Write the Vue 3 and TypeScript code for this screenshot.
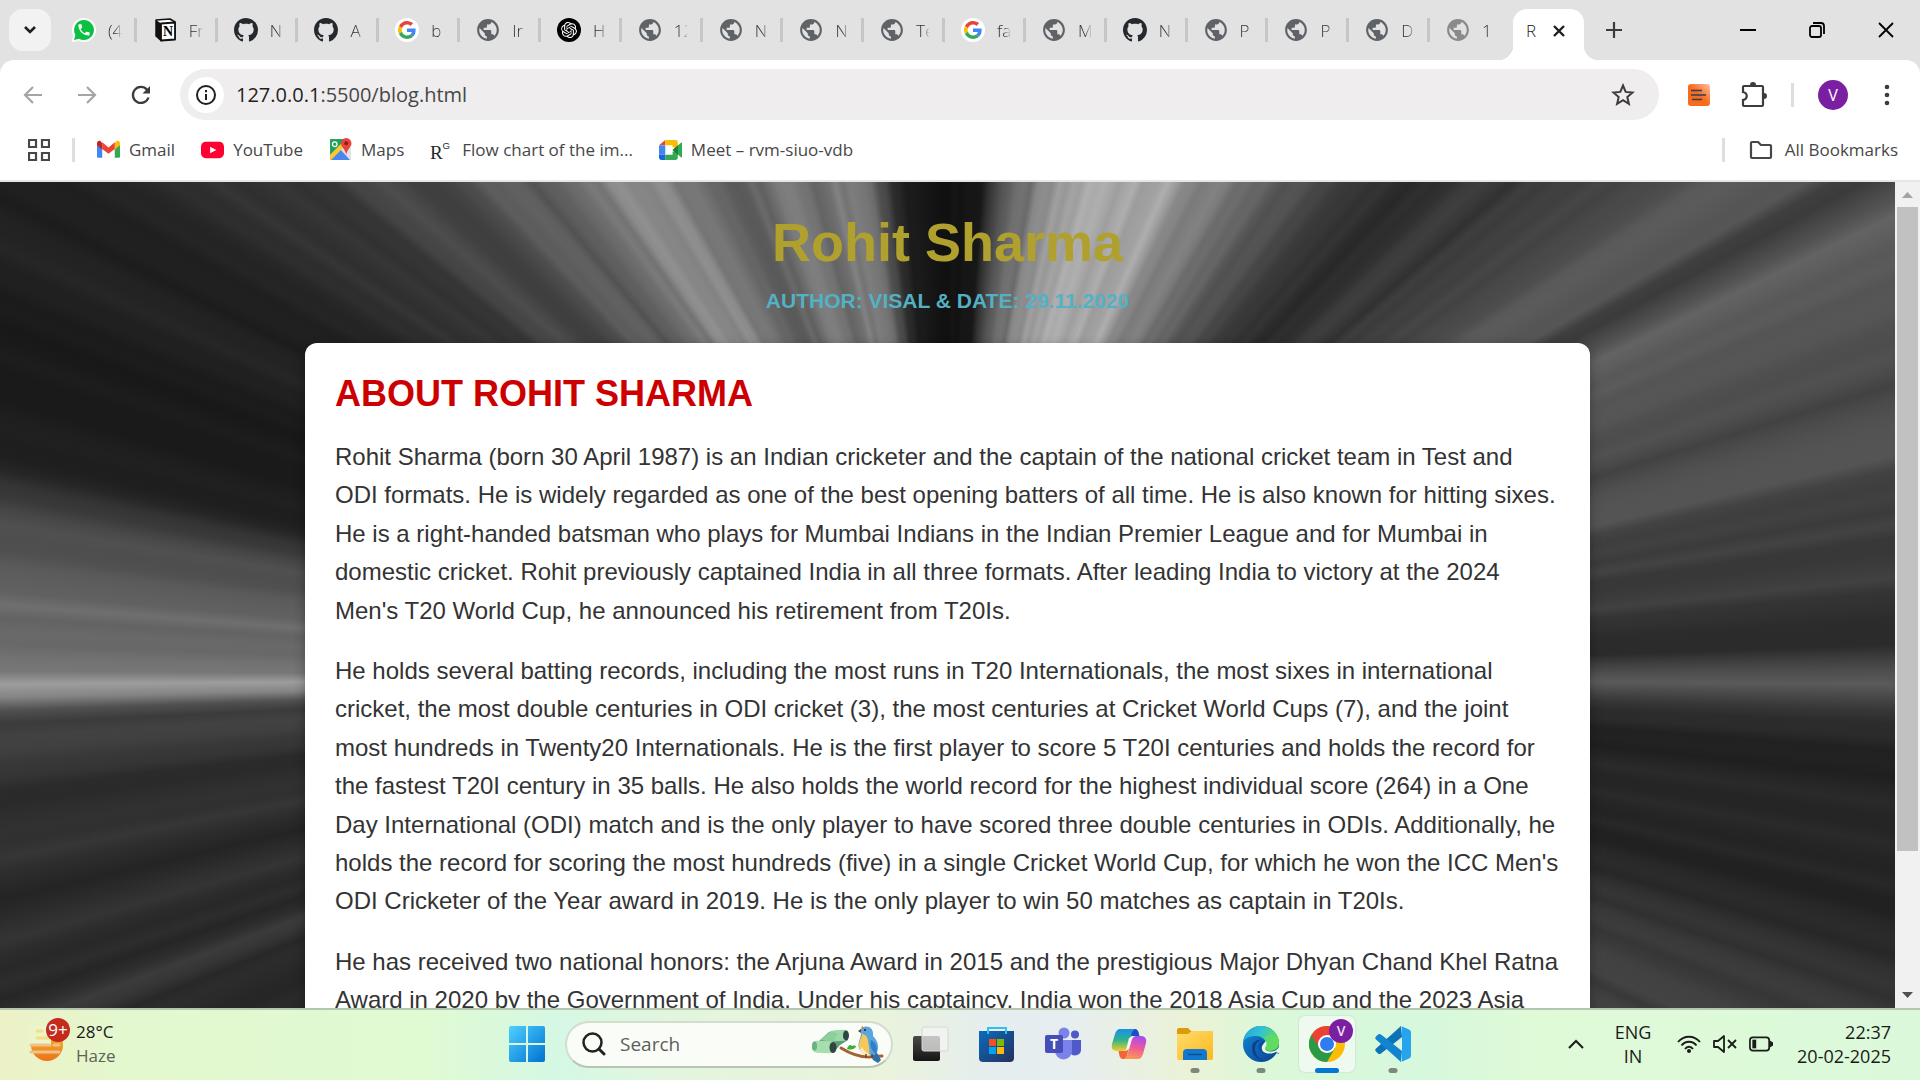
<script setup lang="ts">
import { ref } from 'vue'

interface Tab {
  icon: string
  title: string
}

const tabs: Tab[] = [
  { icon: 'whatsapp', title: '(4' },
  { icon: 'notion', title: 'Fr' },
  { icon: 'github', title: 'N' },
  { icon: 'github', title: 'A' },
  { icon: 'google', title: 'b' },
  { icon: 'globe', title: 'Ir' },
  { icon: 'openai', title: 'H' },
  { icon: 'globe', title: '12' },
  { icon: 'globe', title: 'N' },
  { icon: 'globe', title: 'N' },
  { icon: 'globe', title: 'Te' },
  { icon: 'google', title: 'fa' },
  { icon: 'globe', title: 'M' },
  { icon: 'github', title: 'N' },
  { icon: 'globe', title: 'P' },
  { icon: 'globe', title: 'P' },
  { icon: 'globe', title: 'D' },
  { icon: 'globe-light', title: '1' },
]

const bookmarks: Tab[] = [
  { icon: 'gmail', title: 'Gmail' },
  { icon: 'youtube', title: 'YouTube' },
  { icon: 'maps', title: 'Maps' },
  { icon: 'researchgate', title: 'Flow chart of the im...' },
  { icon: 'meet', title: 'Meet – rvm-siuo-vdb' },
]

const apps = [
  { icon: 'taskview', name: 'Task view', state: '' },
  { icon: 'store', name: 'Microsoft Store', state: '' },
  { icon: 'teams', name: 'Teams', state: '' },
  { icon: 'copilot', name: 'Copilot', state: '' },
  { icon: 'explorer', name: 'File Explorer', state: 'open' },
  { icon: 'edge', name: 'Edge', state: 'open' },
  { icon: 'chrome', name: 'Chrome', state: 'active' },
  { icon: 'vscode', name: 'Visual Studio Code', state: 'open' },
]

const paragraphs: string[] = [
  'Rohit Sharma (born 30 April 1987) is an Indian cricketer and the captain of the national cricket team in Test and ODI formats. He is widely regarded as one of the best opening batters of all time. He is also known for hitting sixes. He is a right-handed batsman who plays for Mumbai Indians in the Indian Premier League and for Mumbai in domestic cricket. Rohit previously captained India in all three formats. After leading India to victory at the 2024 Men\'s T20 World Cup, he announced his retirement from T20Is.',
  'He holds several batting records, including the most runs in T20 Internationals, the most sixes in international cricket, the most double centuries in ODI cricket (3), the most centuries at Cricket World Cups (7), and the joint most hundreds in Twenty20 Internationals. He is the first player to score 5 T20I centuries and holds the record for the fastest T20I century in 35 balls. He also holds the world record for the highest individual score (264) in a One Day International (ODI) match and is the only player to have scored three double centuries in ODIs. Additionally, he holds the record for scoring the most hundreds (five) in a single Cricket World Cup, for which he won the ICC Men\'s ODI Cricketer of the Year award in 2019. He is the only player to win 50 matches as captain in T20Is.',
  'He has received two national honors: the Arjuna Award in 2015 and the prestigious Major Dhyan Chand Khel Ratna Award in 2020 by the Government of India. Under his captaincy, India won the 2018 Asia Cup and the 2023 Asia',
]

const address = ref('')
const query = ref('')

// Brightness of the light streaks by direction: [degrees clockwise from up, grey level]
const rays: [number, number][] = [
  [0, 18], [4, 24], [6, 84], [9, 108], [12, 140], [15, 164], [19, 172], [22, 176], [25, 148],
  [29, 116], [33, 92], [37, 72], [40, 58], [43, 40], [45, 46], [47, 68], [49, 52], [51, 72],
  [53, 68], [56, 80], [58, 102], [60, 84], [61.5, 54], [63, 92], [66, 98], [69, 84], [72, 70],
  [76, 80], [80, 62], [84, 60], [87, 38], [88.5, 50], [89.5, 84], [90.3, 104], [91, 76],
  [92.5, 46], [95, 30], [99, 42], [104, 34], [108, 50], [113, 62], [125, 60], [235, 44],
  [244, 40], [248, 40], [249.5, 62], [251, 36], [254, 50], [257, 32], [259, 54], [263, 38],
  [265, 60], [267.6, 62], [268.4, 84], [268.9, 150], [269.6, 142], [270.6, 112], [272, 96],
  [274, 106], [276.5, 90], [279, 80], [281, 56], [283, 32], [287, 27], [291, 26], [294, 36],
  [297, 28], [300, 34], [303, 44], [306, 58], [308, 50], [311, 72], [314, 66], [317, 92],
  [321, 88], [325, 130], [329, 140], [333, 108], [337, 90], [341, 120], [344, 106],
  [348, 128], [351, 108], [353, 60], [355, 26], [358, 20], [360, 18],
]

function level(deg: number): number {
  let i = 1
  while (i < rays.length - 1 && rays[i][0] < deg) i++
  const [a, la] = rays[i - 1]
  const [b, lb] = rays[i]
  return la + ((lb - la) * (deg - a)) / (b - a)
}

function hash(n: number): number {
  const h = Math.sin(n * 12.9898) * 43758.5453
  return h - Math.floor(h) - 0.5
}

function streaks(): string {
  const stops: string[] = []
  for (let n = 0; n < 450; n++) {
    const deg = n * 0.8
    const grain = hash(n) * 0.22
    const v = Math.round(level(deg) * (1 + grain))
    stops.push(`rgb(${v},${v},${v}) ${deg.toFixed(1)}deg`)
  }
  return `conic-gradient(from 0deg at 50% 60%, ${stops.join(',')})`
}

const pageBackground = { backgroundImage: streaks() }
</script>

<template>
  <svg class="defs" aria-hidden="true">
    <linearGradient id="g-win" x1="0" y1="0" x2="1" y2="1"><stop offset="0" stop-color="#4fd0ff" /><stop offset="1" stop-color="#0072d2" /></linearGradient>
    <linearGradient id="g-sun" x1="0" y1="0" x2="0" y2="1"><stop offset="0" stop-color="#f5c12a" /><stop offset="1" stop-color="#f0701b" /></linearGradient>
    <linearGradient id="g-store" x1="0" y1="0" x2="1" y2="1"><stop offset="0" stop-color="#0a6cc0" /><stop offset="1" stop-color="#25305c" /></linearGradient>
    <linearGradient id="g-cop1" x1="0" y1="0" x2="0" y2="1"><stop offset="0" stop-color="#1a8fee" /><stop offset="0.5" stop-color="#2db38a" /><stop offset="1" stop-color="#f5cf28" /></linearGradient>
    <linearGradient id="g-cop2" x1="0.6" y1="0" x2="0.4" y2="1"><stop offset="0" stop-color="#a34df0" /><stop offset="0.5" stop-color="#ee5a9a" /><stop offset="1" stop-color="#fd9a4a" /></linearGradient>
    <linearGradient id="g-folder" x1="0" y1="0" x2="1" y2="1"><stop offset="0" stop-color="#ffdc6b" /><stop offset="1" stop-color="#fcb81f" /></linearGradient>
    <linearGradient id="g-edge1" x1="0" y1="0" x2="1" y2="0.4"><stop offset="0" stop-color="#22a2d8" /><stop offset="0.5" stop-color="#33c1d5" /><stop offset="1" stop-color="#68e04d" /></linearGradient>
    <linearGradient id="g-edge2" x1="0" y1="0" x2="1" y2="1"><stop offset="0" stop-color="#1289d8" /><stop offset="1" stop-color="#0b3f8f" /></linearGradient>
    <linearGradient id="g-ext" x1="0" y1="1" x2="1" y2="0"><stop offset="0.5" stop-color="#f86a1c" /><stop offset="1" stop-color="#fcc3a5" /></linearGradient>
    <linearGradient id="g-tv" x1="0" y1="0" x2="0" y2="1"><stop offset="0" stop-color="#4a4a48" /><stop offset="1" stop-color="#151515" /></linearGradient>

    <symbol id="whatsapp" viewBox="0 0 24 24">
      <path d="M12 0a12 12 0 0 1 0 24 12 12 0 0 1-5-1L0 24l1-7A12 12 0 0 1 12 0z" fill="#fff" />
      <path d="M12 2a10 10 0 1 1-5 18.700l-5 1.300 1.400-5A10 10 0 0 1 12 2z" fill="#0ac143" />
      <path transform="translate(4.500 4.500) scale(.62)" fill="#fff" d="M6.620 10.790c1.440 2.830 3.760 5.140 6.590 6.590l2.200-2.200c.27-.27.67-.36 1.020-.24 1.120.37 2.330.57 3.570.57.55 0 1 .45 1 1V20c0 .55-.45 1-1 1-9.390 0-17-7.610-17-17 0-.55.45-1 1-1h3.500c.55 0 1 .45 1 1 0 1.250.2 2.450.57 3.570.11.35.03.74-.25 1.020l-2.200 2.200z" />
    </symbol>
    <symbol id="notion" viewBox="0 0 24 24">
      <path d="M3 2l14-1 5 3v17L8 22.500 3 18z" fill="#fff" stroke="#111" stroke-width="1.500" stroke-linejoin="round" />
      <path d="M3 2l5 3.500v17L3 18z" fill="#111" />
      <path d="M8 5.500L22 4.500v17L8 22.500z" fill="#fff" stroke="#111" stroke-width="1.800" stroke-linejoin="round" />
    </symbol>
    <symbol id="github" viewBox="0 0 16 16">
      <path fill="#24292f" d="M8 0C3.580 0 0 3.580 0 8c0 3.540 2.290 6.530 5.470 7.590.4.070.55-.17.55-.38 0-.19-.01-.82-.01-1.490-2.010.37-2.530-.49-2.690-.94-.09-.23-.48-.94-.82-1.130-.28-.15-.68-.52-.01-.53.63-.01 1.080.58 1.230.82.72 1.210 1.870.87 2.330.66.070-.52.28-.87.51-1.070-1.780-.2-3.640-.89-3.640-3.950 0-.87.31-1.590.82-2.150-.08-.2-.36-1.020.08-2.120 0 0 .67-.21 2.200.82.64-.18 1.320-.27 2-.27s1.360.09 2 .27c1.530-1.040 2.200-.82 2.200-.82.44 1.100.16 1.920.08 2.120.51.56.82 1.270.82 2.150 0 3.070-1.870 3.750-3.650 3.950.29.25.54.73.54 1.480 0 1.070-.01 1.930-.01 2.200 0 .21.15.46.55.38A8.010 8.010 0 0 0 16 8c0-4.420-3.580-8-8-8z" />
    </symbol>
    <symbol id="google" viewBox="-8 -8 64 64">
      <circle cx="24" cy="24" r="32" fill="#fff" />
      <path fill="#ea4335" d="M24 9.500c3.540 0 6.710 1.220 9.210 3.600l6.850-6.850C35.900 2.380 30.470 0 24 0 14.620 0 6.510 5.380 2.560 13.220l7.980 6.190C12.430 13.720 17.740 9.500 24 9.500z" />
      <path fill="#4285f4" d="M46.980 24.550c0-1.570-.15-3.090-.38-4.550H24v9.020h12.940c-.58 2.960-2.260 5.480-4.780 7.180l7.730 6c4.510-4.180 7.090-10.360 7.090-17.650z" />
      <path fill="#fbbc05" d="M10.530 28.590c-.48-1.450-.76-2.990-.76-4.590s.27-3.140.76-4.590l-7.980-6.190C.92 16.460 0 20.120 0 24c0 3.880.92 7.540 2.560 10.780l7.970-6.190z" />
      <path fill="#34a853" d="M24 48c6.480 0 11.930-2.130 15.890-5.810l-7.730-6c-2.150 1.450-4.920 2.300-8.160 2.300-6.260 0-11.570-4.220-13.470-9.910l-7.980 6.190C6.510 42.620 14.620 48 24 48z" />
    </symbol>
    <symbol id="globe" viewBox="1 1 22 22">
      <path fill="#5f6368" d="M12 2C6.480 2 2 6.480 2 12s4.480 10 10 10 10-4.480 10-10S17.520 2 12 2zm-1 17.930c-3.950-.49-7-3.850-7-7.930 0-.62.08-1.210.21-1.790L9 15v1c0 1.100.9 2 2 2v1.930zm6.900-2.540c-.26-.81-1-1.390-1.900-1.390h-1v-3c0-.55-.45-1-1-1H8v-2h2c.55 0 1-.45 1-1V7h2c1.100 0 2-.9 2-2v-.41c2.930 1.190 5 4.060 5 7.410 0 2.080-.8 3.970-2.100 5.390z" />
    </symbol>
    <symbol id="globe-light" viewBox="1 1 22 22">
      <path fill="#8a8a8a" d="M12 2C6.480 2 2 6.480 2 12s4.480 10 10 10 10-4.480 10-10S17.520 2 12 2zm-1 17.930c-3.950-.49-7-3.850-7-7.930 0-.62.08-1.210.21-1.790L9 15v1c0 1.100.9 2 2 2v1.930zm6.900-2.540c-.26-.81-1-1.390-1.900-1.390h-1v-3c0-.55-.45-1-1-1H8v-2h2c.55 0 1-.45 1-1V7h2c1.100 0 2-.9 2-2v-.41c2.930 1.190 5 4.060 5 7.410 0 2.080-.8 3.970-2.100 5.390z" />
    </symbol>
    <symbol id="openai" viewBox="-6 -6 36 36">
      <circle cx="12" cy="12" r="18" />
      <path fill="#fff" d="M22.282 9.821a5.985 5.985 0 0 0-.516-4.911 6.046 6.046 0 0 0-6.510-2.900A6.065 6.065 0 0 0 4.981 4.182a5.985 5.985 0 0 0-3.998 2.900 6.046 6.046 0 0 0 .743 7.097 5.980 5.980 0 0 0 .511 4.911 6.051 6.051 0 0 0 6.515 2.900A5.985 5.985 0 0 0 13.260 24a6.056 6.056 0 0 0 5.772-4.206 5.989 5.989 0 0 0 3.998-2.900 6.056 6.056 0 0 0-.748-7.073zm-9.022 12.608a4.476 4.476 0 0 1-2.876-1.041l.142-.080 4.778-2.758a.795.795 0 0 0 .393-.681v-6.737l2.020 1.169a.071.071 0 0 1 .038.052v5.583a4.504 4.504 0 0 1-4.495 4.494zm-9.661-4.125a4.471 4.471 0 0 1-.535-3.014l.142.085 4.783 2.758a.771.771 0 0 0 .781 0l5.843-3.369v2.332a.080.080 0 0 1-.033.062L9.740 19.950a4.499 4.499 0 0 1-6.141-1.646zM2.341 7.896a4.485 4.485 0 0 1 2.366-1.973V11.600a.766.766 0 0 0 .388.677l5.814 3.354-2.020 1.169a.076.076 0 0 1-.071 0l-4.830-2.787A4.504 4.504 0 0 1 2.341 7.872zm16.596 3.856L13.104 8.364 15.119 7.200a.076.076 0 0 1 .071 0l4.830 2.791a4.494 4.494 0 0 1-.677 8.104v-5.677a.79.79 0 0 0-.407-.667zm2.011-3.023l-.142-.085-4.774-2.782a.776.776 0 0 0-.785 0L9.409 9.230V6.897a.066.066 0 0 1 .028-.062l4.830-2.787a4.499 4.499 0 0 1 6.680 4.660zM8.307 12.863l-2.020-1.164a.080.080 0 0 1-.038-.057V6.074a4.499 4.499 0 0 1 7.376-3.454l-.142.081L8.704 5.459a.795.795 0 0 0-.393.681zm1.098-2.365l2.602-1.500 2.607 1.500v2.999l-2.597 1.500-2.607-1.500z" />
    </symbol>

    <symbol id="gmail" viewBox="0 0 22 22">
      <path d="M0 5v13a1 1 0 0 0 1 1h4V9z" fill="#4285f4" />
      <path d="M22 5v13a1 1 0 0 1-1 1h-4V9z" fill="#34a853" />
      <path d="M17 5v6l5-4V5c0-2-2-3-3.500-2z" fill="#fbbc04" />
      <path d="M5 5v6L0 7V5c0-2 2-3 3.500-2z" fill="#c5221f" />
      <path d="M5 4l6 5 6-5v6.500L11 15l-6-4.500z" fill="#ea4335" />
    </symbol>
    <symbol id="youtube" viewBox="0 0 24 22">
      <rect x="0" y="3" width="24" height="17" rx="5" fill="#ff0033" />
      <path d="M9.500 8l6.500 3.500-6.500 3.500z" fill="#fff" />
    </symbol>
    <symbol id="maps" viewBox="0 0 22 22">
      <path d="M1 1h16v20H1z" fill="#1fa15a" />
      <path d="M1 20L18 3l3 6v12H1z" fill="#dfe3e6" />
      <path d="M1 21l10-10 9 10z" fill="#4a86ee" />
      <path d="M1 16L14 3l3 3L2 21H1z" fill="#fbc834" />
      <circle cx="5.500" cy="6" r="2.200" fill="none" stroke="#fff" stroke-width="1.200" />
      <path d="M16.500 0a5 5 0 0 1 5 5c0 4-4 5-5 11-1-6-5-7-5-11a5 5 0 0 1 5-5z" fill="#e8453c" />
      <circle cx="16.500" cy="5" r="1.900" fill="#8c1d18" />
    </symbol>
    <symbol id="meet" viewBox="0 0 22 22">
      <path d="M0 7l6-5v5z" fill="#ea4335" />
      <path d="M6 2h10a2 2 0 0 1 2 2v5h-5V7H6z" fill="#fbbc04" />
      <path d="M0 7h6v9H0z" fill="#4285f4" />
      <path d="M0 16h6v5H2a2 2 0 0 1-2-2z" fill="#1967d2" />
      <path d="M6 16h7v-3h5v6a2 2 0 0 1-2 2H6z" fill="#34a853" />
      <path d="M13 11.500L21 4.500c.5-.4 1 0 1 .5v13c0 .5-.5.9-1 .5z" fill="#34a853" />
      <path d="M13 11.500l5-4.500v9z" fill="#188038" />
    </symbol>

    <symbol id="taskview" viewBox="0 0 36 36">
      <rect x="0" y="10" width="27" height="25" rx="2" fill="url(#g-tv)" />
      <rect x="9" y="1" width="26" height="24" rx="2" fill="#f4f4f4" fill-opacity=".72" stroke="#d6d6d6" />
    </symbol>
    <symbol id="store" viewBox="0 0 36 36">
      <path d="M0 5h35v27a4 4 0 0 1-4 4H4a4 4 0 0 1-4-4z" fill="url(#g-store)" />
      <path d="M9 8V2h18v6" fill="none" stroke="#2cc0f4" stroke-width="2" />
      <path d="M10 13h7v7h-7z" fill="#f25022" /><path d="M18 13h7v7h-7z" fill="#7fba00" />
      <path d="M10 21h7v7h-7z" fill="#00a4ef" /><path d="M18 21h7v7h-7z" fill="#ffb900" />
    </symbol>
    <symbol id="teams" viewBox="0 0 36 36">
      <circle cx="30" cy="8.500" r="4" fill="#5059c9" />
      <path d="M24 14h12v10a6 6 0 0 1-10 4z" fill="#5059c9" />
      <circle cx="19" cy="7" r="5.500" fill="#7b83eb" />
      <path d="M10 14h17v11a8.500 8.500 0 0 1-17 0z" fill="#7b83eb" />
      <rect x="0" y="9" width="18" height="18" rx="2" fill="#464eb8" />
    </symbol>
    <symbol id="copilot" viewBox="0 0 36 36">
      <path d="M21 3h3c2 0 3 1.500 3.500 3l1 4h-7c-3 0-4 2-5 5z" fill="#1d4fc4" />
      <path d="M15 33h-3c-2 0-3-1.500-3.500-3l-1-5h6c3 0 4-2 5-5z" fill="#f2643c" />
      <path d="M9 3h15c-2 1-3 3-3.500 5l-4 13c-.7 2.500-2 4-5 4H6c-4 0-6-2-5-7L4 8c1-3 2.500-5 5-5z" fill="url(#g-cop1)" />
      <path d="M27 33H13c2-1 3-3 3.500-5l4-13c.7-2.500 2-5 5-5H30c4 0 6 3 5 7l-3 11c-1 3-2.500 5-5 5z" fill="url(#g-cop2)" />
      <path d="M18 12l3-1-3 12-3 1z" fill="#f3f6f4" />
    </symbol>
    <symbol id="explorer" viewBox="0 0 36 36">
      <path d="M0 4a2 2 0 0 1 2-2h9l4 4-4 4H0z" fill="#dc9b0b" />
      <path d="M0 8h11l4-3h20a1 1 0 0 1 1 1v26a2 2 0 0 1-2 2H2a2 2 0 0 1-2-2z" fill="url(#g-folder)" />
      <path d="M6 34v-7a4 4 0 0 1 4-4h16a4 4 0 0 1 4 4v7z" fill="#1279ce" />
      <path d="M11 28.500h14" stroke="#0b4f93" stroke-width="1.500" />
    </symbol>
    <symbol id="edge" viewBox="0 0 36 36">
      <circle cx="18" cy="18" r="18" fill="url(#g-edge2)" />
      <path d="M0 16C1 7 8 0 18 0s18 8 18 16c0 6-4 9-9 9-3 0-5-1-5-2.500 0-1 1-2 1-4.500 0-5-5-8-10-8-6 0-11 2-13 6z" fill="url(#g-edge1)" />
      <path d="M9 22c0 7 6 13 14 13-7-1-11-6-11-12 0-5 3-9 7-9-6-1-10 3-10 8z" fill="#0c3f8c" />
      <path d="M23.500 15c-3-1.500-7 0-8 4-1 6 4 10 10 10 3.500 0 6-1 8-2l4 1v-7l-5 2c-2 1.500-4 2-6 2-3 0-5-1.500-5-3 0-1 2-3 2-7z" fill="#0c50a3" />
      <path d="M23 14.500c2 4 0 6.500-1 8 0 1.500 2 3 6 3 3 0 6-1.500 8-4.500v6l-2.500-.5c.3-.6 0-.9-.5-.6-2 1-4.500 1.600-7 1.600-5 0-8-3-7-7 .5-2 2-3 4-6z" fill="#e4f8dc" />
      <path d="M21 12c3 3 3 7 1 9.500 0 2 2 3.500 6 3.500 5 0 8-4 8-9l-9-8z" fill="#5fdc62" fill-opacity=".65" />
    </symbol>
    <symbol id="chrome" viewBox="0 0 36 36">
      <circle cx="18" cy="18" r="18" fill="#fbbc05" />
      <path d="M18 18L2.400 9A18 18 0 0 0 18 36l8-14z" fill="#2a9a47" />
      <path d="M18 9h15.600A18 18 0 0 0 2.400 9l8 13z" fill="#ea4335" />
      <circle cx="18" cy="18" r="9" fill="#fff" />
      <circle cx="18" cy="18" r="7" fill="#2f7bf0" />
    </symbol>
    <symbol id="vscode" viewBox="0 0 36 36">
      <path d="M26 0L1 22.500c-1 1-1 2 0 3l2 2c1 .8 2 .8 3 0L27 11z" fill="#0c73ba" />
      <path d="M26 36L1 13.500c-1-1-1-2 0-3l2-2c1-.8 2-.8 3 0L27 25z" fill="#1384cf" />
      <path d="M26 0l8 3.500c1 .5 2 1.500 2 3v23c0 1.500-1 2.500-2 3L26 36c1-1 1-1 1-3V3c0-1.500 0-2-1-3z" fill="#26a4ee" />
    </symbol>
  </svg>

  <div class="desktop">
    <header class="tabstrip">
      <button class="tab-search" aria-label="Search tabs">
        <svg width="14" height="10" viewBox="0 0 14 10"><path d="M2 2l5 5 5-5" fill="none" stroke="#1f1f1f" stroke-width="2.600" /></svg>
      </button>
      <nav class="tabs">
        <button v-for="(tab, i) in tabs" :key="i" class="tab">
          <svg class="favicon" viewBox="0 0 24 24">
            <use :href="'#' + tab.icon" />
            <text v-if="tab.icon === 'notion'" x="15" y="18" text-anchor="middle" font-family="Liberation Serif, serif" font-weight="bold" font-size="14">N</text>
          </svg>
          <span class="tab-title">{{ tab.title }}</span>
        </button>
      </nav>
      <div class="tab-active">
        <span class="active-title">R</span>
        <button class="tab-close" aria-label="Close tab">
          <svg width="14" height="14" viewBox="0 0 14 14"><path d="M2 2l10 10M12 2L2 12" stroke="#1f1f1f" stroke-width="2.400" /></svg>
        </button>
      </div>
      <button class="strip-button" aria-label="New tab">
        <svg width="16" height="16" viewBox="0 0 16 16"><path d="M8 0v16M0 8h16" stroke="#3c3c3c" stroke-width="2.200" /></svg>
      </button>
      <div class="window-controls">
        <button aria-label="Minimise"><svg width="16" height="16" viewBox="0 0 16 16"><path d="M0 8h16" stroke="#000" stroke-width="2" /></svg></button>
        <button aria-label="Restore">
          <svg width="16" height="16" viewBox="0 0 16 16"><g fill="none" stroke="#000" stroke-width="1.800"><rect x="1" y="4" width="11" height="11" rx="2" /><path d="M4 1h8a3 3 0 0 1 3 3v8" /></g></svg>
        </button>
        <button aria-label="Close"><svg width="16" height="16" viewBox="0 0 16 16"><path d="M1 1l14 14M15 1L1 15" stroke="#000" stroke-width="1.800" /></svg></button>
      </div>
    </header>

    <div class="chrome-bars">
      <div class="toolbar">
        <button class="nav-button" aria-label="Back"><svg width="20" height="20" viewBox="0 0 20 20"><path d="M19 10H2M10 2l-8 8 8 8" fill="none" stroke="#a5a5a5" stroke-width="2.200" /></svg></button>
        <button class="nav-button" aria-label="Forward"><svg width="20" height="20" viewBox="0 0 20 20"><path d="M1 10h17M10 2l8 8-8 8" fill="none" stroke="#a5a5a5" stroke-width="2.200" /></svg></button>
        <button class="nav-button" aria-label="Reload"><svg width="20" height="20" viewBox="0 0 20 20"><path d="M17.500 12.500A8 8 0 1 1 16 4.700L18 7" fill="none" stroke="#3c3c3c" stroke-width="2.300" /><path d="M19 1v7.500h-7.500z" fill="#3c3c3c" /></svg></button>
        <label class="omnibox">
          <span class="site-info"><svg width="20" height="20" viewBox="0 0 20 20"><circle cx="10" cy="10" r="9" fill="none" stroke="#1f1f1f" stroke-width="2" /><path d="M10 9v6M10 5v2.200" stroke="#1f1f1f" stroke-width="2" /></svg></span>
          <span class="url">127.0.0.1<span class="url-path">:5500/blog.html</span></span>
          <input v-model="address" class="url-input" type="text" aria-label="Address" />
          <svg class="star" width="24" height="24" viewBox="0 0 24 24"><path d="M12 2.500l2.700 6.400 6.800.6-5.200 4.500 1.600 6.800L12 17.200l-5.900 3.600 1.600-6.800-5.200-4.500 6.800-.6z" fill="none" stroke="#3c3c3c" stroke-width="2" /></svg>
        </label>
        <div class="toolbar-end">
          <button class="tool" aria-label="Reader extension"><svg width="22" height="22" viewBox="0 0 22 22"><rect width="22" height="22" rx="3" fill="url(#g-ext)" /><path d="M3 6.500h11M3 11h15M4 15.500h10" stroke="#274259" stroke-width="1.700" /></svg></button>
          <button class="tool" aria-label="Extensions"><svg width="26" height="26" viewBox="0 0 26 26"><path d="M3 4h18a1 1 0 0 1 1 1v18a1 1 0 0 1-1 1H3a1 1 0 0 1-1-1v-5c5-1 5-7 0-8V5a1 1 0 0 1 1-1z" fill="none" stroke="#3c3c3c" stroke-width="2.200" /><path d="M9 3a3 3 0 0 1 6 0zM23 11a3 3 0 0 1 0 6z" fill="#3c3c3c" /></svg></button>
          <span class="rule"></span>
          <button class="avatar" aria-label="Profile">V</button>
          <button class="menu" aria-label="Menu"><svg width="6" height="22" viewBox="0 0 6 22"><g fill="#3c3c3c"><circle cx="3" cy="3" r="2.300" /><circle cx="3" cy="11" r="2.300" /><circle cx="3" cy="19" r="2.300" /></g></svg></button>
        </div>
      </div>
      <nav class="bookmarks">
        <button class="apps" aria-label="Apps"><svg width="22" height="22" viewBox="0 0 22 22"><path d="M1 1h7v7H1zM14 1h7v7h-7zM1 14h7v7H1zM14 14h7v7h-7z" fill="none" stroke="#474747" stroke-width="2.200" /></svg></button>
        <span class="rule"></span>
        <a v-for="b in bookmarks" :key="b.title" class="bookmark" href="#">
          <svg v-if="b.icon === 'researchgate'" class="mark" viewBox="0 0 24 24" fill="#1e2b2b">
            <text x="0" y="22" font-family="Liberation Serif, serif" font-size="20">R</text>
            <text x="13" y="11" font-family="Liberation Sans, sans-serif" font-size="10">G</text>
          </svg>
          <svg v-else class="mark"><use :href="'#' + b.icon" /></svg>{{ b.title }}
        </a>
        <span class="rule rule-end"></span>
        <a class="bookmark all" href="#">
          <svg width="24" height="20" viewBox="0 0 24 20"><path d="M3 2h6l3 3h9a1 1 0 0 1 1 1v11a1 1 0 0 1-1 1H3a1 1 0 0 1-1-1V3a1 1 0 0 1 1-1z" fill="none" stroke="#474747" stroke-width="2.200" /></svg>All Bookmarks
        </a>
      </nav>
    </div>

    <div class="viewport">
      <main class="page" :style="pageBackground">
        <h1>Rohit Sharma</h1>
        <p class="byline">Author: Visal &amp; Date: 29.11.2020</p>
        <article class="card">
          <h2>About Rohit Sharma</h2>
          <p v-for="(text, i) in paragraphs" :key="i">{{ text }}</p>
        </article>
      </main>
      <div class="scrollbar" aria-hidden="true">
        <svg width="11" height="6" viewBox="0 0 11 6"><path d="M0 6l5.500-6L11 6z" fill="#a3a3a3" /></svg>
        <div class="track"><div class="thumb"></div></div>
        <svg width="11" height="6" viewBox="0 0 11 6"><path d="M0 0l5.500 6L11 0z" fill="#505050" /></svg>
      </div>
    </div>

    <footer class="taskbar">
      <button class="weather">
        <span class="weather-icon">
          <svg width="36" height="38" viewBox="0 0 36 38">
            <circle cx="18" cy="20" r="16" fill="url(#g-sun)" />
            <path d="M0 0h36v14H22v5H0z" fill="#eaf5cb" />
            <g stroke-linecap="round" stroke-width="3"><path d="M8 6h5M8 13h12" stroke="#f8dc86" /><path d="M2 20h19M25 20h5M2 27h28" stroke="#ecc389" /></g>
          </svg>
          <span class="count">9+</span>
        </span>
        <span class="weather-text">28°C<small>Haze</small></span>
      </button>

      <div class="dock">
        <button class="app" aria-label="Start"><svg class="app-icon" viewBox="0 0 36 36"><path d="M2 0h15v17H0V2a2 2 0 0 1 2-2zM19 0h15a2 2 0 0 1 2 2v15H19zM0 19h17v17H2a2 2 0 0 1-2-2zM19 19h17v15a2 2 0 0 1-2 2H19z" fill="url(#g-win)" /></svg></button>
        <label class="search">
          <svg width="24" height="24" viewBox="0 0 24 24"><circle cx="10.500" cy="10.500" r="9" fill="none" stroke="#222" stroke-width="2.500" /><path d="M17 17l5 5" stroke="#222" stroke-width="3" stroke-linecap="round" /></svg>
          <input v-model="query" type="text" placeholder="Search" aria-label="Search" />
          <svg width="80" height="38" viewBox="0 0 80 38">
            <path d="M8 16l10-9 12-2 7 3v7l-8 5-6 7-12 1z" fill="#5f9b78" />
            <rect x="20" y="5" width="17" height="11" rx="4" fill="#9fd8a8" transform="rotate(-4 28 10)" />
            <path d="M9 15l11-9 7 3-5 8z" fill="#8dce9d" />
            <rect x="1" y="16" width="23" height="12" rx="5" fill="#a6dfae" transform="rotate(3 12 22)" />
            <ellipse cx="35" cy="10.500" rx="3" ry="5" fill="#2f4740" /><ellipse cx="22" cy="22.500" rx="3.500" ry="5.500" fill="#2f4740" />
            <ellipse cx="3.500" cy="21" rx="2.500" ry="4.500" fill="#6fb083" />
            <path d="M30 23c8 5 17 9 28 9l13-1" fill="none" stroke="#a5622f" stroke-width="3" stroke-linecap="round" />
            <path d="M36 24c1-4 4-5 5-3 3-1 4 0 4 1-3 3-6 3-9 2z" fill="#3fae3a" />
            <path d="M57 24l8 2 5 9-3 3-5-3z" fill="#2f6fa8" />
            <path d="M50 4l3-2c6-2 10 3 9 9 5 5 7 12 3 18-6 4-15 1-17-6-2-6 3-10 2-19z" fill="#5aa5de" />
            <path d="M50 8c4 2 7 3 7 8 1 6 2 10 1 14-6 0-10-4-10-9s3-8 3-13z" fill="#f6c75b" />
            <path d="M51 22c2 4 5 6 9 8-6 2-10-1-11-5z" fill="#fbe8bd" />
            <path d="M50 4l-3 2 3 2z" fill="#444" /><path d="M50 4l1-3 3 2z" fill="#d28437" /><circle cx="54" cy="5" r="1" fill="#123" />
            <path d="M60 15c5 2 7 8 5 14-4-3-7-8-5-14z" fill="#2f80c4" />
            <path d="M55 29v4M61 29v4" stroke="#7a3d20" stroke-width="1.500" />
          </svg>
        </label>
        <button v-for="app in apps" :key="app.icon" class="app" :class="app.state" :aria-label="app.name">
          <svg class="app-icon" viewBox="0 0 36 36">
            <use :href="'#' + app.icon" />
            <text v-if="app.icon === 'teams'" x="9" y="23" text-anchor="middle" font-family="Open Sans, sans-serif" font-weight="bold" font-size="14" fill="#fff">T</text>
          </svg>
          <span v-if="app.state === 'active'" class="profile">V</span>
        </button>
      </div>

      <div class="tray">
        <button class="tray-button" aria-label="Hidden icons"><svg width="18" height="12" viewBox="0 0 18 12"><path d="M2 10l7-7 7 7" fill="none" stroke="#1b1b1b" stroke-width="2" /></svg></button>
        <button class="lang">ENG<br />IN</button>
        <button class="status" aria-label="Network, sound and battery">
          <svg width="24" height="20" viewBox="0 0 24 20"><g fill="none" stroke="#1b1b1b" stroke-width="1.900"><path d="M1 8C7 1 17 1 23 8M4.500 11.500c4-5 11-5 15 0M8 15c2-3 6-3 8 0" /></g><circle cx="12" cy="17" r="2" fill="#1b1b1b" /></svg>
          <svg width="24" height="20" viewBox="0 0 24 20"><path d="M1 7h4l6-5v16l-6-5H1z" fill="none" stroke="#1b1b1b" stroke-width="1.800" stroke-linejoin="round" /><path d="M15 6l8 8M23 6l-8 8" stroke="#1b1b1b" stroke-width="1.800" /></svg>
          <svg width="24" height="20" viewBox="0 0 25 20"><rect x="1" y="3" width="20" height="14" rx="3" fill="none" stroke="#1b1b1b" stroke-width="1.800" /><path d="M3.500 5.500h4v9h-4z" fill="#1b1b1b" /><path d="M22 7l3 2v2l-3 2z" fill="#1b1b1b" stroke="#1b1b1b" /></svg>
        </button>
        <button class="clock">22:37<br />20-02-2025</button>
      </div>
    </footer>
  </div>
</template>

<style>
html,
body {
  margin: 0;
  overflow: hidden;
}
</style>

<style scoped>
.defs {
  position: absolute;
  width: 0;
  height: 0;
}

.desktop {
  display: flex;
  flex-direction: column;
  height: 100vh;
  overflow: hidden;
  font-family: "Open Sans", "Noto Sans", sans-serif;
  color: #1b1b1b;
}

button {
  display: flex;
  align-items: center;
  justify-content: center;
  margin: 0;
  padding: 0;
  border: 0;
  background: none;
  color: inherit;
  font: inherit;
}

input {
  min-width: 0;
  flex: 1;
  padding: 0;
  border: 0;
  outline: 0;
  background: none;
  color: inherit;
  font: inherit;
}

svg {
  flex: none;
}

/* Tab strip */
.tabstrip {
  display: flex;
  align-items: center;
  height: 60px;
  flex: none;
  background: #e2e2e2;
}

.tab-search {
  width: 42px;
  height: 42px;
  margin: 0 5px 0 9px;
  flex: none;
  border-radius: 14px;
  background: #f2f2f2;
}

.tabs {
  display: flex;
  flex: 1;
  min-width: 0;
  margin-right: 2px;
}

.tab {
  flex: 1 1 0;
  min-width: 0;
  height: 24px;
  padding-left: 16px;
  gap: 12px;
  justify-content: flex-start;
  border-right: 3px solid #c6c6c6;
  font-size: 17px;
  font-weight: 300;
  color: #333;
}

.tab:last-child {
  border-color: transparent;
}

.favicon {
  width: 24px;
  height: 24px;
}

.tab-title {
  width: 14px;
  overflow: hidden;
  white-space: nowrap;
  text-align: left;
  -webkit-mask-image: linear-gradient(90deg, #000 50%, transparent);
  mask-image: linear-gradient(90deg, #000 50%, transparent);
}

.tab-active {
  position: relative;
  display: flex;
  align-items: center;
  align-self: flex-end;
  justify-content: space-between;
  box-sizing: border-box;
  width: 71px;
  height: 51px;
  padding: 0 18px 8px 13px;
  flex: none;
  border-radius: 14px 14px 0 0;
  background: #fff;
  font-size: 17px;
  font-weight: 300;
}

.tab-active::before,
.tab-active::after {
  content: "";
  position: absolute;
  bottom: 0;
  width: 14px;
  height: 14px;
}

.tab-active::before {
  right: 100%;
  background: radial-gradient(circle at 0 0, transparent 14px, #fff 14px);
}

.tab-active::after {
  left: 100%;
  background: radial-gradient(circle at 100% 0, transparent 14px, #fff 14px);
}

.strip-button {
  width: 60px;
  height: 42px;
  flex: none;
}

.window-controls {
  display: flex;
  margin-left: 69px;
  flex: none;
}

.window-controls button {
  width: 69px;
  height: 60px;
}

/* Toolbar and bookmarks */
.chrome-bars {
  flex: none;
  border-bottom: 2px solid #e2e8e2;
  background: linear-gradient(#e2e2e2 14px, #fff 14px);
}

.toolbar {
  display: flex;
  align-items: center;
  height: 69px;
  padding: 0 6px;
  border-radius: 14px 14px 0 0;
  background: #fff;
}

.nav-button {
  width: 54px;
  height: 42px;
  flex: none;
}

.omnibox {
  display: flex;
  align-items: center;
  box-sizing: border-box;
  flex: 1;
  min-width: 0;
  height: 51px;
  margin-left: 12px;
  padding: 0 24px 0 8px;
  border-radius: 26px;
  background: #efedee;
  font-size: 20px;
}

.site-info {
  display: flex;
  align-items: center;
  justify-content: center;
  width: 36px;
  height: 36px;
  margin-right: 12px;
  border-radius: 50%;
  background: #fff;
}

.url {
  color: #1f1f1f;
}

.url-path {
  color: #474747;
}

.toolbar-end {
  display: flex;
  align-items: center;
  width: 255px;
  flex: none;
}

.tool {
  width: 55px;
  height: 42px;
}

.tool:first-child {
  margin-left: 12px;
}

.rule {
  width: 3px;
  height: 24px;
  flex: none;
  background: #dedede;
}

.toolbar-end .rule {
  margin-left: 10px;
}

.avatar {
  width: 30px;
  height: 30px;
  margin-left: 24px;
  border-radius: 50%;
  background: #7b1fa2;
  color: #fff;
  font-size: 16px;
}

.menu {
  width: 42px;
  height: 42px;
  margin-left: 18px;
}

.bookmarks {
  display: flex;
  align-items: center;
  height: 41px;
  padding: 0 22px 10px 28px;
  background: #fff;
}

.apps {
  margin-right: 22px;
}

.bookmark {
  display: flex;
  align-items: center;
  gap: 9px;
  margin-left: 26px;
  color: #474747;
  font-size: 17px;
  text-decoration: none;
  white-space: nowrap;
}

.bookmark:first-of-type {
  margin-left: 22px;
}

.mark {
  width: 23px;
  height: 23px;
  overflow: visible;
}

.rule-end {
  margin-left: auto;
}

.bookmark.all {
  gap: 12px;
  margin-left: 24px;
}

/* Web page */
.viewport {
  display: flex;
  flex: 1;
  min-height: 0;
}

.page {
  flex: 1;
  min-width: 0;
  overflow: hidden;
  background-color: #222;
  font-family: "Liberation Sans", Arial, sans-serif;
  line-height: 1.6;
  color: #333;
}

h1 {
  margin: 17px 0 0;
  font-size: 54px;
  text-align: center;
  color: #b0a02e;
}

.byline {
  margin: 0;
  font-size: 21px;
  font-weight: bold;
  line-height: 32px;
  text-align: center;
  text-transform: uppercase;
  color: #53b1c3;
}

.card {
  max-width: 1225px;
  margin: 26px auto;
  padding: 22px 30px;
  border-radius: 12px;
  background: #fff;
  box-shadow: 0 4px 12px rgba(0, 0, 0, 0.3);
  font-size: 24px;
}

h2 {
  margin: 0 0 15px;
  font-size: 36px;
  text-transform: uppercase;
  color: #cc0000;
}

.card p {
  margin: 0 0 22px;
}

.scrollbar {
  display: flex;
  flex-direction: column;
  align-items: center;
  gap: 9px;
  box-sizing: border-box;
  width: 25px;
  padding: 10px 2px;
  flex: none;
  background: #f1f1f1;
}

.track {
  width: 100%;
  flex: 1;
}

.thumb {
  height: 83%;
  background: #c1c1c1;
}

/* Taskbar */
.taskbar {
  display: grid;
  grid-template-columns: 1fr auto 1fr;
  align-items: center;
  box-sizing: border-box;
  height: 72px;
  flex: none;
  padding-bottom: 2px;
  border-top: 2px solid #b4c5b0;
  background: linear-gradient(90deg, #edf1c6, #e3f8cf 7%, #e0fad2 22%, #d5f8e4 29%, #e3f5de 35%, #eaf3dc 46%, #e5edf0 52%, #e7eeef 56%, #ebf2d6 62%, #dcf8d9 66%, #d6f8dd 74%, #dffad7 80%, #dbf9da);
  font-size: 17px;
  line-height: 24px;
}

.weather {
  justify-content: flex-start;
  gap: 11px;
  padding-left: 29px;
}

.weather-icon {
  position: relative;
  display: flex;
}

.count {
  position: absolute;
  top: -7px;
  right: -5px;
  width: 24px;
  height: 24px;
  border-radius: 50%;
  background: #c42b1c;
  color: #fff;
  text-align: center;
}

.weather-text {
  text-align: left;
}

.weather-text small {
  display: block;
  font-size: 17px;
  color: #5c6455;
}

.dock {
  display: flex;
  align-items: center;
  gap: 10px;
}

.search {
  display: flex;
  align-items: center;
  box-sizing: border-box;
  width: 328px;
  height: 47px;
  padding: 0 0 0 15px;
  gap: 14px;
  border: 2px solid #d3ddcc;
  border-bottom-color: #b9c4b2;
  border-radius: 24px;
  background: #fafdf7;
  font-size: 19px;
}

.search input::placeholder {
  color: #5d5d5d;
  opacity: 1;
}

.app {
  position: relative;
  width: 56px;
  height: 56px;
  border-radius: 6px;
}

.app-icon {
  width: 36px;
  height: 36px;
}

.app.active {
  background: #eefaf0;
  box-shadow: 0 0 2px #b8cdb9;
}

.open::after,
.active::after {
  content: "";
  position: absolute;
  bottom: -1px;
  left: 50%;
  width: 9px;
  height: 5px;
  border-radius: 3px;
  background: #7d8a7b;
  transform: translateX(-50%);
}

.active::after {
  width: 24px;
  background: #0078d4;
}

.profile {
  position: absolute;
  top: 3px;
  right: 2px;
  width: 24px;
  height: 24px;
  border-radius: 50%;
  background: #7b1fa2;
  color: #eadcf2;
  font-size: 14px;
  font-weight: 600;
}

.tray {
  display: flex;
  align-items: center;
  justify-content: flex-end;
  padding-right: 29px;
  font-size: 18px;
}

.tray-button {
  width: 42px;
  height: 56px;
  margin-right: 16px;
}

.lang {
  width: 40px;
  margin-right: 24px;
  text-align: center;
}

.status {
  gap: 12px;
  margin-right: 24px;
}

.clock {
  text-align: right;
}
</style>
